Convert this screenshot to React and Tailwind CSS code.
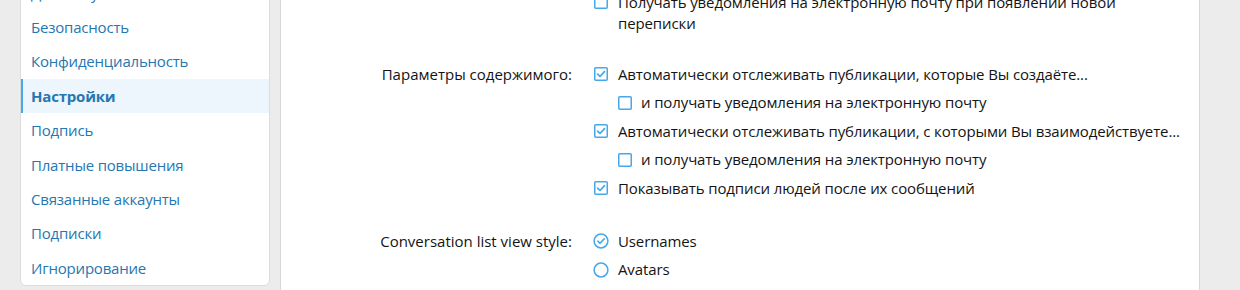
import React from "react";

const menuItems = [
  { label: "Данные учётной записи" },
  { label: "Безопасность" },
  { label: "Конфиденциальность" },
  { label: "Настройки", active: true },
  { label: "Подпись" },
  { label: "Платные повышения" },
  { label: "Связанные аккаунты" },
  { label: "Подписки" },
  { label: "Игнорирование" },
];

function CheckBox({ checked }) {
  return (
    <svg width="14" height="14" viewBox="0 0 14 14" className="shrink-0">
      <rect x="0.75" y="0.75" width="12.5" height="12.5" rx="1" fill="none" stroke="#47a7eb" strokeWidth="1.5" />
      {checked && (
        <path d="M3.6 7.2 L6 9.5 L10.5 4.6" fill="none" stroke="#47a7eb" strokeWidth="1.7" strokeLinecap="round" strokeLinejoin="round" />
      )}
    </svg>
  );
}

function Radio({ checked }) {
  return (
    <svg width="16" height="16" viewBox="0 0 16 16" className="shrink-0 -ml-[1px]">
      <circle cx="8" cy="8" r="6.9" fill="none" stroke="#47a7eb" strokeWidth="1.5" />
      {checked && (
        <path d="M4.9 8.2 L7.1 10.3 L11.2 5.9" fill="none" stroke="#47a7eb" strokeWidth="1.6" strokeLinecap="round" strokeLinejoin="round" />
      )}
    </svg>
  );
}

function Choice({ type = "check", checked, nested, children }) {
  return (
    <div className={nested ? "flex items-start pl-[24px]" : "flex items-start"}>
      <div className={nested ? "w-[23px] h-[21px] flex items-center" : "w-[24px] h-[21px] flex items-center"}>
        {type === "check" ? <CheckBox checked={checked} /> : <Radio checked={checked} />}
      </div>
      <div className="flex-1 leading-[21px]">{children}</div>
    </div>
  );
}

function FormRow({ label, children, className = "" }) {
  return (
    <div className={`flex ${className}`}>
      <div className="w-[303px] shrink-0 pr-[12px] text-right leading-[21px] tracking-normal">{label}</div>
      <div className="flex-1 pl-[10px] pr-[10px] flex flex-col gap-[7.5px]">{children}</div>
    </div>
  );
}

export default function App() {
  return (
    <div
      className="h-[290px] w-[1240px] overflow-hidden bg-[#ececec] flex items-start pl-[20px] text-[#141414]"
      style={{ fontFamily: '"Open Sans", "Noto Sans", sans-serif' }}
    >
      {/* Sidebar */}
      <div className="w-[250px] shrink-0 -mt-[25.4px] bg-white border border-[#dcdcdc] rounded-b-[6px] overflow-hidden">
        {menuItems.map((item) => (
          <div
            key={item.label}
            className={
              item.active
                ? "h-[34.4px] flex items-center -ml-[1px] pl-[8px] border-l-[3px] border-[#47a7eb] bg-[#edf6fd] text-[15px] tracking-[-0.2px] text-[#2577b1] font-bold"
                : "h-[34.4px] flex items-center pl-[10px] text-[15px] tracking-[-0.2px] text-[#2577b1]"
            }
          >
            {item.label}
          </div>
        ))}
      </div>

      {/* Main panel */}
      <div className="ml-[10px] w-[920px] h-[290px] shrink-0 bg-white border-x border-[#d8d8d8] text-[15px] tracking-[-0.12px]">
        <div className="flex flex-col -mt-[8.5px]">
          <FormRow label="">
            <Choice checked={false}>
              Получать уведомления на электронную почту при появлении новой переписки
            </Choice>
          </FormRow>

          <FormRow label="Параметры содержимого:" className="mt-[30px]">
            <Choice checked>Автоматически отслеживать публикации, которые Вы создаёте...</Choice>
            <Choice nested checked={false}>и получать уведомления на электронную почту</Choice>
            <Choice checked>Автоматически отслеживать публикации, с которыми Вы взаимодействуете...</Choice>
            <Choice nested checked={false}>и получать уведомления на электронную почту</Choice>
            <Choice checked>Показывать подписи людей после их сообщений</Choice>
          </FormRow>

          <FormRow label="Conversation list view style:" className="mt-[32px]">
            <Choice type="radio" checked>Usernames</Choice>
            <Choice type="radio" checked={false}>Avatars</Choice>
          </FormRow>
        </div>
      </div>
    </div>
  );
}
